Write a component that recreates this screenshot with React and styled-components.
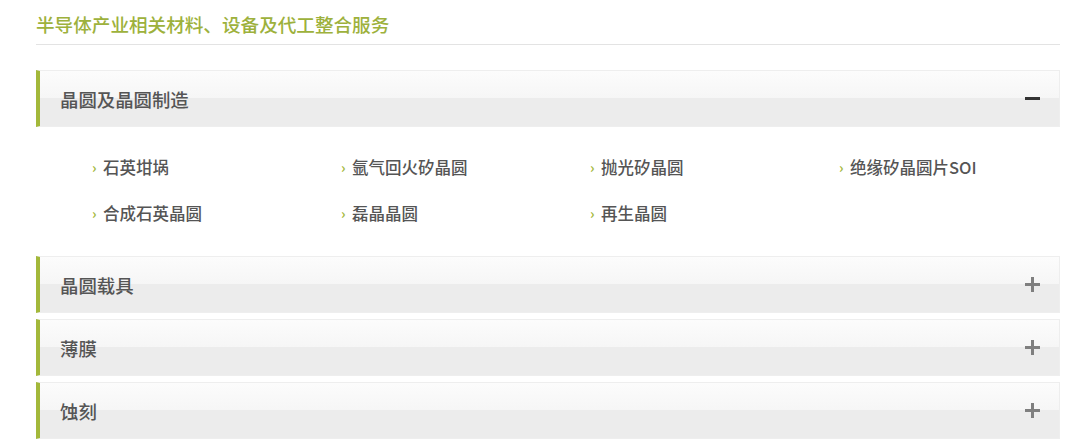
import React, { useState } from 'react';
import styled, { createGlobalStyle } from 'styled-components';

const GlobalStyle = createGlobalStyle`
  body {
    margin: 0;
    background: #fff;
    font-family: "Noto Sans CJK SC", "Noto Sans", sans-serif;
  }
`;

const Page = styled.div`
  width: 1024px;
  padding-left: 36px;
`;

const Title = styled.h2`
  margin: 0;
  padding: 11px 0 7px;
  font-size: 18.6px;
  line-height: 26px;
  font-weight: 500;
  color: #9db13c;
  border-bottom: 1px solid #e3e3e3;
`;

const List = styled.div`
  margin-top: 25px;
`;

const Item = styled.div`
  margin-bottom: 6px;
`;

const Head = styled.div`
  box-sizing: border-box;
  height: 57px;
  display: flex;
  align-items: center;
  justify-content: space-between;
  padding: 0 19px 0 20px;
  border: 1px solid #eeeeee;
  border-left: 4px solid #a3b83a;
  background: linear-gradient(to bottom, #fcfcfc 0%, #f6f6f6 49%, #ececec 49%, #ececec 100%);
  cursor: pointer;
`;

const HeadText = styled.span`
  font-size: 18.4px;
  font-weight: 500;
  color: #555;
`;

const Body = styled.div`
  padding: 28px 0 25px 56px;
  display: grid;
  grid-template-columns: repeat(4, 249px);
  row-gap: 22px;
`;

const Link = styled.div`
  display: flex;
  align-items: center;
  font-size: 16.5px;
  font-weight: 500;
  line-height: 24px;
  color: #555;
`;

const Arrow = styled.span`
  width: 11px;
  font-size: 14px;
  font-weight: 700;
  color: #a3b83a;
`;

const Icon = ({ open }) => (
  <svg width="15" height="15" viewBox="0 0 15 15">
    <line x1="0" y1="7.5" x2="15" y2="7.5" stroke={open ? '#333' : '#7f7f7f'} strokeWidth="3" />
    {!open && <line x1="7.5" y1="0" x2="7.5" y2="15" stroke="#7f7f7f" strokeWidth="3" />}
  </svg>
);

const sections = [
  {
    name: '晶圆及晶圆制造',
    items: ['石英坩埚', '氩气回火矽晶圆', '抛光矽晶圆', '绝缘矽晶圆片SOI', '合成石英晶圆', '磊晶晶圆', '再生晶圆'],
  },
  { name: '晶圆载具', items: [] },
  { name: '薄膜', items: [] },
  { name: '蚀刻', items: [] },
];

export default function App() {
  const [open, setOpen] = useState(0);

  return (
    <Page>
      <GlobalStyle />
      <Title>半导体产业相关材料、设备及代工整合服务</Title>
      <List>
        {sections.map((s, i) => (
          <Item key={s.name}>
            <Head onClick={() => setOpen(open === i ? -1 : i)}>
              <HeadText>{s.name}</HeadText>
              <Icon open={open === i} />
            </Head>
            {open === i && (
              <Body>
                {s.items.map(t => (
                  <Link key={t}>
                    <Arrow>›</Arrow>
                    {t}
                  </Link>
                ))}
              </Body>
            )}
          </Item>
        ))}
      </List>
    </Page>
  );
}
